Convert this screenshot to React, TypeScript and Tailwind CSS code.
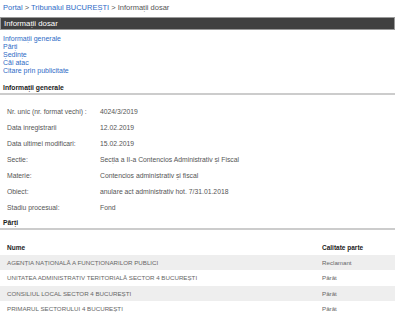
import React from "react";

const rows: [string, string][] = [
  ["Nr. unic (nr. format vechi) :", "4024/3/2019"],
  ["Data inregistrarii", "12.02.2019"],
  ["Data ultimei modificari:", "15.02.2019"],
  ["Sectie:", "Secția a II-a Contencios Administrativ și Fiscal"],
  ["Materie:", "Contencios administrativ și fiscal"],
  ["Obiect:", "anulare act administrativ hot. 7/31.01.2018"],
  ["Stadiu procesual:", "Fond"],
];

const parti: [string, string][] = [
  ["AGENȚIA NAȚIONALĂ A FUNCȚIONARILOR PUBLICI", "Reclamant"],
  ["UNITATEA ADMINISTRATIV TERITORIALĂ SECTOR 4 BUCUREȘTI", "Pârât"],
  ["CONSILIUL LOCAL SECTOR 4 BUCUREȘTI", "Pârât"],
  ["PRIMARUL SECTORULUI 4 BUCUREȘTI", "Pârât"],
];

export default function App() {
  return (
    <div
      className="w-[400px] h-[320px] overflow-hidden bg-white"
      style={{ fontFamily: '"Liberation Sans", Arial, sans-serif' }}
    >
      <div className="w-[395px]">
        {/* breadcrumb */}
        <div className="pt-[3px] pl-[3px] text-[7.5px] leading-[10px] text-[#555]">
          <span className="text-[#2e6bc6]">Portal</span>
          <span> &gt; </span>
          <span className="text-[#2e6bc6]">Tribunalul BUCUREȘTI</span>
          <span> &gt; Informații dosar</span>
        </div>
        {/* bar */}
        <div className="mt-[4px] h-[13px] bg-[#404040] border border-[#9a9a9a] flex items-center pl-[3px] text-[7.8px] text-white">
          Informații dosar
        </div>
        {/* links */}
        <div className="mt-[5px] pl-[3px] flex flex-col text-[7px] leading-[7.9px] text-[#2e6bc6]">
          <span>Informații generale</span>
          <span>Părți</span>
          <span>Ședințe</span>
          <span>Căi atac</span>
          <span>Citare prin publicitate</span>
        </div>
        {/* heading */}
        <div className="mt-[8px] pl-[3px] text-[6.8px] leading-[10px] font-bold text-[#222] border-b-2 border-[#cccccc]">
          Informații generale
        </div>
        <div className="mt-[10px] flex flex-col text-[6.8px] text-[#555]">
          {rows.map(([k, v]) => (
            <div key={k} className="h-[16px] flex items-center">
              <span className="w-[100px] pl-[7px] shrink-0">{k}</span>
              <span>{v}</span>
            </div>
          ))}
        </div>
        <div className="mt-[1px] pl-[3px] text-[6.8px] leading-[10px] font-bold text-[#222] border-b-2 border-[#cccccc]">
          Părți
        </div>
        <div className="mt-[11px] h-[14px] flex items-center text-[6.5px] font-bold text-[#222]">
          <span className="w-[322px] pl-[7px] shrink-0">Nume</span>
          <span>Calitate parte</span>
        </div>
        <div className="flex flex-col text-[6.2px] text-[#666]">
          {parti.map(([n, c], i) => (
            <div
              key={n}
              className={
                "h-[15.5px] flex items-center " + (i % 2 === 0 ? "bg-[#eeeeee]" : "bg-white")
              }
            >
              <span className="w-[322px] pl-[7px] shrink-0">{n}</span>
              <span>{c}</span>
            </div>
          ))}
        </div>
      </div>
    </div>
  );
}
